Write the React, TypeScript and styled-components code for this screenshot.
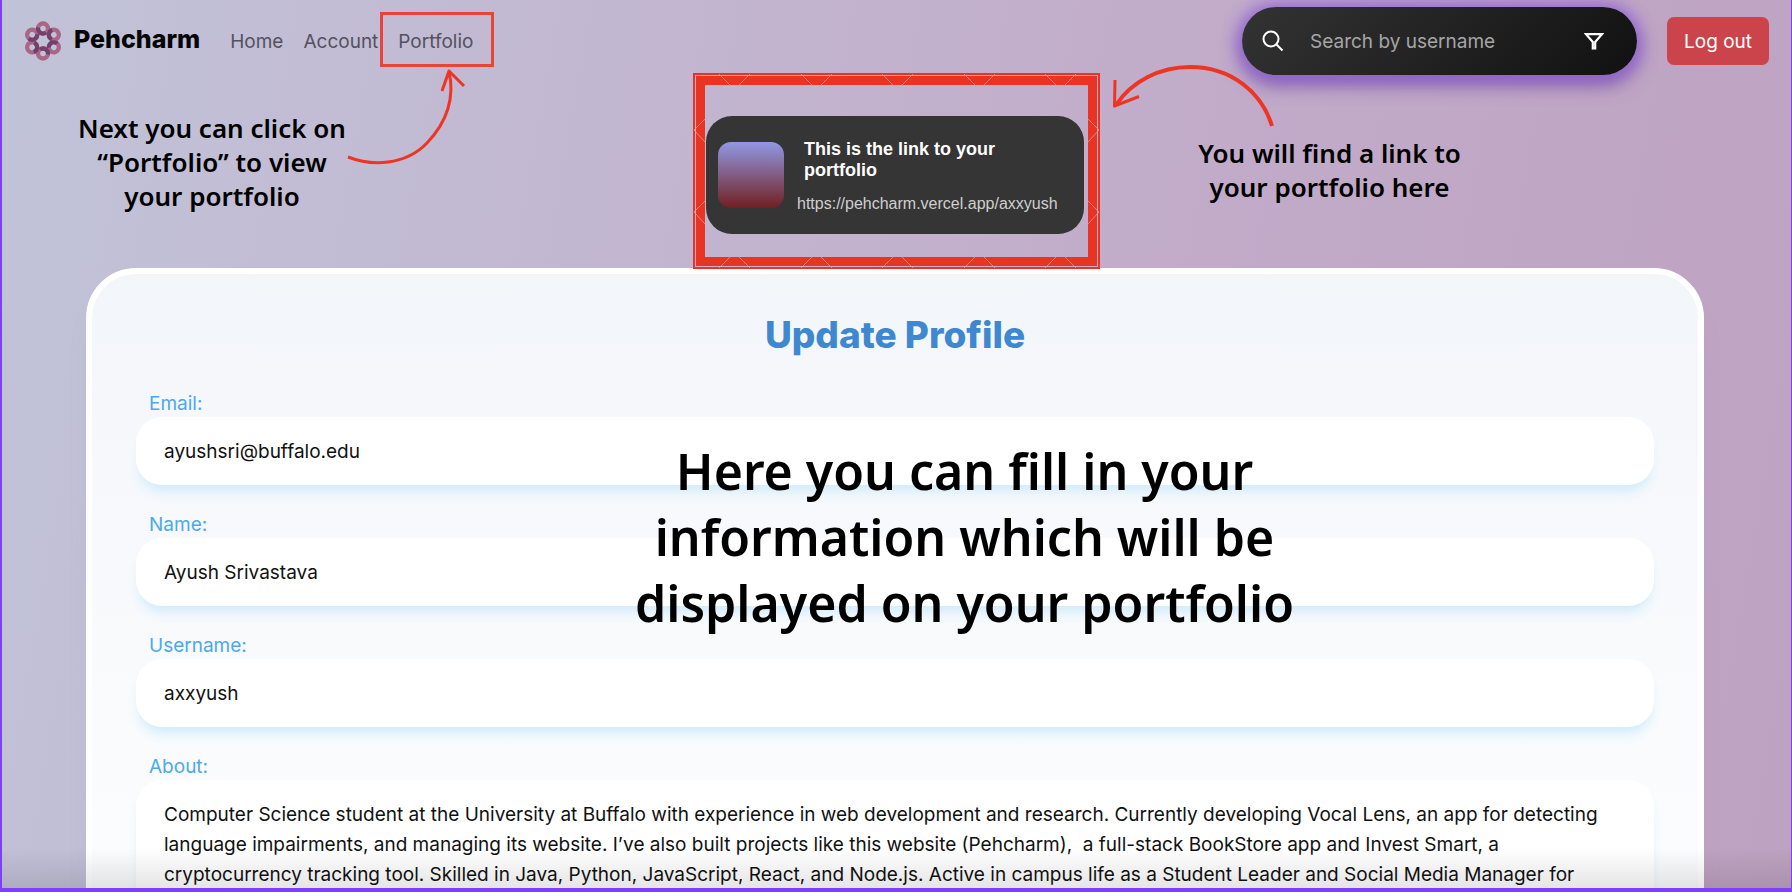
import React from "react";
import styled, { createGlobalStyle } from "styled-components";

const sans = `Inter, "Liberation Sans", sans-serif`;

const GlobalStyle = createGlobalStyle`
  *, *::before, *::after { box-sizing: border-box; }
  body { margin: 0; font-family: ${sans}; }
`;

const Frame = styled.div`
  position: relative;
  height: 100vh;
  overflow: hidden;
  border: solid #7f3ff8;
  border-width: 0 1px 4px 2px;
  background: linear-gradient(100deg, #c0c3d8 0%, #c2bdd5 16%, #c2b2ce 45%, #c1a9c8 70%, #bea2c1 100%);

  &::after {
    content: "";
    position: absolute;
    inset: auto 0 0;
    height: 40px;
    background: linear-gradient(rgba(0, 0, 0, 0), rgba(0, 0, 0, 0.1));
    pointer-events: none;
  }
`;

const Header = styled.header`
  display: flex;
  align-items: center;
  height: 82px;
  padding: 0 22px;
`;

const Brand = styled.a`
  display: flex;
  align-items: center;
  gap: 12px;
  color: #050505;
  font-size: 25px;
  font-weight: 800;
  line-height: 32px;
  text-decoration: none;

  span { padding-bottom: 4px; }
`;

const Nav = styled.nav`
  display: flex;
  gap: 20px;
  margin-left: 30px;
`;

const NavLink = styled.a<{ $marked?: boolean }>`
  position: relative;
  padding-top: 2px;
  color: #54515f;
  font-size: 19px;
  line-height: 28px;
  text-decoration: none;

  ${(p) =>
    p.$marked &&
    `&::after {
      content: "";
      position: absolute;
      inset: -14px -21px -11px -18px;
      border: 3px solid #e9433a;
    }`}
`;

const Search = styled.form`
  display: flex;
  align-items: center;
  width: 395px;
  height: 68px;
  margin-left: auto;
  padding: 0 33px 0 20px;
  border-radius: 34px;
  background: linear-gradient(135deg, #333333, #111111);
  box-shadow: 0 0 16px 3px #9a6bdc, 0 8px 20px rgba(85, 40, 150, 0.7);
`;

const SearchInput = styled.input`
  flex: 1;
  min-width: 0;
  padding: 2px 0 0;
  border: 0;
  outline: 0;
  background: none;
  color: #ffffff;
  font: 400 19px/28px ${sans};

  &::placeholder { color: #a6a6a6; opacity: 1; }
`;

const IconButton = styled.button`
  display: flex;
  padding: 0;
  border: 0;
  background: none;
`;

const SearchLead = styled(IconButton)`
  margin-right: 26px;
`;

const LogOut = styled.button`
  height: 48px;
  margin-left: 30px;
  padding: 2px 17px 0;
  border: 0;
  border-radius: 7px;
  background: #cc444b;
  color: #ffffff;
  font: 400 19px/28px ${sans};
`;

const LinkArea = styled.section`
  display: flex;
  justify-content: center;
  height: 186px;
  padding: 34px 3px 0 0;
`;

const LinkCard = styled.div`
  position: relative;
  display: flex;
  align-items: center;
  gap: 13px;
  width: 378px;
  height: 118px;
  padding: 0 12px;
  border-radius: 26px;
  background: #353535;
  font-family: "Liberation Sans", Arial, sans-serif;
`;

const LinkFrame = styled.div`
  position: absolute;
  inset: -43px -16px -35px -13px;
  border: 2px solid #e93323;
  padding: 1px;

  &::before {
    content: "";
    display: block;
    height: 100%;
    border: 9px solid #e93323;
  }

  svg {
    position: absolute;
    inset: -2px;
  }
`;

const Swatch = styled.div`
  flex: none;
  width: 66px;
  height: 66px;
  border-radius: 13px;
  background: linear-gradient(#9198e5, #712020);
`;

const LinkText = styled.div`
  padding-top: 2px;
`;

const LinkTitle = styled.h2`
  max-width: 220px;
  margin: 0 0 13px 7px;
  color: #ffffff;
  font-size: 18px;
  line-height: 21px;
`;

const LinkUrl = styled.a`
  display: block;
  color: #cfcfcf;
  font-size: 16px;
  line-height: 20px;
  text-decoration: none;
`;

const Panel = styled.main`
  margin: 0 87px 0 84px;
  padding: 40px 44px;
  border: 6px solid #ffffff;
  border-radius: 50px;
  background: linear-gradient(#f2f6f9, #f5f7fb 12%, #fafcfd 70%, #ffffff);
  box-shadow: 0 30px 30px -20px rgba(133, 150, 200, 0.6);
`;

const Title = styled.h1`
  margin: 0 0 34px;
  color: #3f88cf;
  font-size: 37px;
  font-weight: 800;
  line-height: 42px;
  text-align: center;
`;

const Field = styled.div`
  margin-bottom: 26px;
`;

const Label = styled.label`
  display: block;
  padding-left: 13px;
  color: #4ba9ee;
  font-size: 19px;
  line-height: 27px;
`;

const control = `
  display: block;
  width: 100%;
  border: 0;
  border-radius: 26px;
  outline: 0;
  background: #ffffff;
  box-shadow: 0 10px 12px -4px #cfebfb;
  color: #111111;
`;

const TextInput = styled.input`
  ${control}
  height: 68px;
  padding: 0 28px;
  font: 400 19px/30px ${sans};
`;

const TextArea = styled.textarea`
  ${control}
  height: 240px;
  padding: 20px 28px;
  resize: none;
  overflow: hidden;
  font: 400 19px/30px ${sans};
`;

const Note = styled.p<{ $left: string; $top: number; $width: number; $large?: boolean }>`
  position: absolute;
  left: ${(p) => p.$left};
  top: ${(p) => p.$top}px;
  width: ${(p) => p.$width}px;
  margin: 0;
  color: #000000;
  font-family: "Noto Sans", "Open Sans", sans-serif;
  font-size: ${(p) => (p.$large ? 50 : 26)}px;
  font-weight: 600;
  line-height: ${(p) => (p.$large ? 66 : 34)}px;
  text-align: center;
  pointer-events: none;
`;

const Arrow = styled.svg<{ $left: string; $top: number }>`
  position: absolute;
  left: ${(p) => p.$left};
  top: ${(p) => p.$top}px;
  fill: none;
  stroke: #ee3524;
  stroke-linejoin: round;
  pointer-events: none;
`;

const Logo = () => (
  <svg width="38" height="40" viewBox="-19 -20 38 40" fill="none" aria-hidden="true">
    {[0, 60, 120, 180, 240, 300].map((a) => (
      <circle key={a} cx="0" cy="-12.500" r="5" stroke="#a96686" strokeWidth="4.400" transform={`rotate(${a})`} />
    ))}
    {[0, 60, 120, 180, 240, 300].map((a) => (
      <path
        key={a}
        d="M-4.900 -13.500A5 5 0 0 0 3 -8.500"
        stroke="#743f6c"
        strokeWidth="4"
        transform={`rotate(${a})`}
      />
    ))}
  </svg>
);

const FrameMarks = () => (
  <svg width="407" height="196" viewBox="0 0 407 196" fill="none" stroke="#e8a7a4" strokeOpacity="0.7" aria-hidden="true">
    {[0, 82, 163, 245, 326].map((x) => (
      <path key={x} transform={`translate(${x})`} d="M26 1L37 12M57 1L46 12M26 195L37 184M57 195L46 184" />
    ))}
    {[0, 82].map((y) => (
      <path key={y} transform={`translate(0 ${y})`} d="M12 46L1 57L12 69M395 46L406 57L395 69" />
    ))}
  </svg>
);

const fields = [
  { id: "email", label: "Email:", value: "ayushsri@buffalo.edu" },
  { id: "name", label: "Name:", value: "Ayush Srivastava" },
  { id: "username", label: "Username:", value: "axxyush" },
];

const about =
  "Computer Science student at the University at Buffalo with experience in web development and research. Currently developing Vocal Lens, an app for detecting language impairments, and managing its website. I’ve also built projects like this website (Pehcharm),  a full-stack BookStore app and Invest Smart, a cryptocurrency tracking tool. Skilled in Java, Python, JavaScript, React, and Node.js. Active in campus life as a Student Leader and Social Media Manager for";

export default function App() {
  return (
    <Frame>
      <GlobalStyle />
      <Header>
        <Brand href="#home">
          <Logo />
          <span>Pehcharm</span>
        </Brand>
        <Nav>
          <NavLink href="#home">Home</NavLink>
          <NavLink href="#account">Account</NavLink>
          <NavLink href="#portfolio" $marked>Portfolio</NavLink>
        </Nav>
        <Search role="search" onSubmit={(e) => e.preventDefault()}>
          <SearchLead type="submit" aria-label="Search">
            <svg width="22" height="22" viewBox="0 0 22 22" fill="none" stroke="#fff" strokeWidth="2">
              <circle cx="9" cy="9" r="7.500" />
              <path d="M14.500 14.500L20.500 20.500" />
            </svg>
          </SearchLead>
          <SearchInput type="text" aria-label="Search by username" placeholder="Search by username" />
          <IconButton type="button" aria-label="Filter">
            <svg width="20" height="18" viewBox="0 0 20 18" fill="none" stroke="#fff" strokeWidth="2.200">
              <path d="M2 2.200H18L11.200 10V16.500H8.800V10Z" />
            </svg>
          </IconButton>
        </Search>
        <LogOut type="button">Log out</LogOut>
      </Header>

      <LinkArea>
        <LinkCard>
          <Swatch />
          <LinkText>
            <LinkTitle>This is the link to your portfolio</LinkTitle>
            <LinkUrl href="#axxyush">https://pehcharm.vercel.app/axxyush</LinkUrl>
          </LinkText>
          <LinkFrame>
            <FrameMarks />
          </LinkFrame>
        </LinkCard>
      </LinkArea>

      <Panel>
        <Title>Update Profile</Title>
        {fields.map((f) => (
          <Field key={f.id}>
            <Label htmlFor={f.id}>{f.label}</Label>
            <TextInput id={f.id} type="text" defaultValue={f.value} />
          </Field>
        ))}
        <Field>
          <Label htmlFor="about">About:</Label>
          <TextArea id="about" defaultValue={about} />
        </Field>
      </Panel>

      <Note $left="60px" $top={111} $width={300}>
        Next you can click on
        <br />
        “Portfolio” to view
        <br />
        your portfolio
      </Note>
      <Arrow $left="344px" $top={66} width="124" height="102" viewBox="346 66 124 102" strokeWidth="3">
        <path d="M348 157C371 166 405 166 427 143C447 122 455 98 449 71M442 91L449 71L464 86" />
      </Arrow>
      <Note $left="calc(50% + 273px)" $top={136} $width={320}>
        You will find a link to
        <br />
        your portfolio here
      </Note>
      <Arrow $left="calc(50% + 213px)" $top={60} width="170" height="72" viewBox="1110 60 170 72" strokeWidth="3">
        <path strokeWidth="4" d="M1272 126C1262 93 1232 67 1190 67C1160 67 1132 81 1116 105" />
        <path d="M1115 80L1114.500 106L1139 96.500" />
      </Arrow>
      <Note $left="calc(50% - 332px)" $top={438} $width={800} $large>
        Here you can fill in your
        <br />
        information which will be
        <br />
        displayed on your portfolio
      </Note>
    </Frame>
  );
}
